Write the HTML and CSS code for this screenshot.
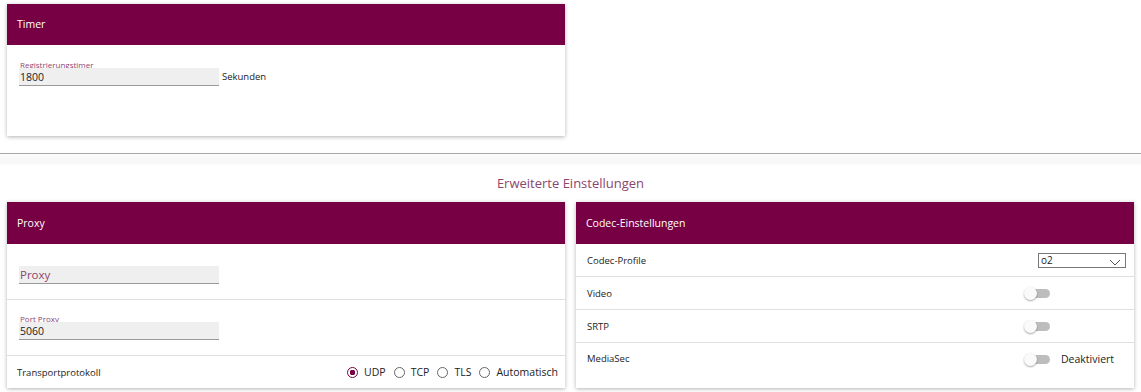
FILE: index.html
```html
<!DOCTYPE html>
<html lang="de">
<head>
    <meta charset="UTF-8">
    <meta name="viewport" content="width=device-width, initial-scale=1.0">
    <title>SIP Einstellungen</title>
    <link rel="stylesheet" href="styles.css">
</head>
<body>
    <div class="top">
        <div class="card timer">
            <div class="card-header">Timer</div>
            <div class="card-body">
                <div class="field-line">
                    <div class="field">
                        <label class="field-label">Registrierungstimer</label>
                        <input class="field-input" type="text" value="1800">
                    </div>
                    <span class="unit">Sekunden</span>
                </div>
            </div>
        </div>
    </div>

    <div class="divider"></div>

    <div class="section-title">Erweiterte Einstellungen</div>

    <div class="advanced">
        <!-- Proxy -->
        <div class="card">
            <div class="card-header">Proxy</div>
            <div class="rows">
                <div class="row input-row">
                    <div class="field">
                        <label class="field-label"></label>
                        <input class="field-input" type="text" placeholder="Proxy">
                    </div>
                </div>
                <div class="row input-row">
                    <div class="field">
                        <label class="field-label">Port Proxy</label>
                        <input class="field-input" type="text" value="5060">
                    </div>
                </div>
                <div class="row last">
                    <span class="row-label">Transportprotokoll</span>
                    <div class="radios">
                        <label class="radio"><input type="radio" name="proto" checked> UDP</label>
                        <label class="radio"><input type="radio" name="proto"> TCP</label>
                        <label class="radio"><input type="radio" name="proto"> TLS</label>
                        <label class="radio"><input type="radio" name="proto"> Automatisch</label>
                    </div>
                </div>
            </div>
        </div>

        <!-- Codec -->
        <div class="card">
            <div class="card-header">Codec-Einstellungen</div>
            <div class="rows">
                <div class="row codec-row">
                    <span class="row-label">Codec-Profile</span>
                    <div class="control">
                        <div class="select">
                            <span>o2</span>
                            <svg width="12" height="7" viewBox="0 0 12 7"><path d="M1 1 L6 6 L11 1" fill="none" stroke="#555" stroke-width="1"/></svg>
                        </div>
                    </div>
                </div>
                <div class="row codec-row">
                    <span class="row-label">Video</span>
                    <div class="control"><span class="switch"></span></div>
                </div>
                <div class="row codec-row">
                    <span class="row-label">SRTP</span>
                    <div class="control"><span class="switch"></span></div>
                </div>
                <div class="row codec-row last">
                    <span class="row-label">MediaSec</span>
                    <div class="control"><span class="switch"></span><span class="state">Deaktiviert</span></div>
                </div>
            </div>
        </div>
    </div>
</body>
</html>
```

FILE: styles.css
```css
body {
    margin: 0;
    font-family: 'Open Sans', 'Segoe UI', sans-serif;
    background-color: #fff;
    color: #222;
    height: 392px;
    overflow: hidden;
}
.top {
    display: grid;
    grid-template-columns: 1fr 1fr;
    gap: 11px;
    padding: 4px 7px 0;
}
.advanced {
    display: grid;
    grid-template-columns: 1fr 1fr;
    gap: 11px;
    padding: 0 7px;
}
.card {
    background-color: #fff;
    box-shadow: 0 1px 4px rgba(0, 0, 0, 0.3);
    display: flex;
    flex-direction: column;
}
.advanced .card {
    height: 186px;
}
.card-header {
    background-color: #770044;
    color: #fff;
    font-size: 10.5px;
    height: 42px;
    flex: none;
    line-height: 42px;
    padding-left: 10px;
}
.timer {
    height: 132px;
}
.timer .card-header {
    height: 41px;
    line-height: 40px;
}
.card-body {
    padding: 15px 12px;
}
.field-line {
    display: flex;
    align-items: flex-end;
    gap: 3px;
}
.field {
    display: flex;
    flex-direction: column;
    width: 200px;
}
.field-label {
    font-size: 8px;
    line-height: 9px;
    height: 9px;
    color: #8c466e;
    padding-left: 1px;
    margin-bottom: -1px;
}
.field-input {
    width: 200px;
    height: 18px;
    box-sizing: border-box;
    border: none;
    border-bottom: 1px solid #9a9a9a;
    background-color: #efefef;
    font-family: inherit;
    font-size: 10.5px;
    color: #222;
    padding: 0 1px;
    margin: 0;
    outline: none;
}
.field-input::placeholder {
    color: #8c466e;
    font-size: 11.5px;
}
.unit {
    font-size: 9.5px;
    line-height: 18px;
}
.divider {
    margin-top: 17px;
    border-top: 1px solid #a8a8a8;
    height: 12px;
    background: linear-gradient(#fdfdfd, #f6f6f6 70%, #fff);
}
.section-title {
    text-align: center;
    color: #8c466e;
    font-size: 13px;
    line-height: 18px;
    padding: 8px 0 10px;
}
.rows {
    display: flex;
    flex-direction: column;
    flex: 1;
}
.row {
    display: flex;
    align-items: center;
    border-bottom: 1px solid #e0e0e0;
    padding: 0 10px;
}
.row.last {
    border-bottom: none;
    flex: 1;
}
.input-row {
    height: 56px;
    flex: none;
    padding-left: 12px;
    align-items: flex-start;
    padding-top: 14px;
    box-sizing: border-box;
}
.row-label {
    font-size: 9.5px;
    flex: 1;
}
.radios {
    display: flex;
    align-items: center;
    gap: 8px;
    font-size: 10.5px;
    margin-right: -3px;
}
.radio {
    display: flex;
    align-items: center;
    gap: 6px;
}
.radio input {
    appearance: none;
    width: 11px;
    height: 11px;
    margin: 0;
    border: 1px solid #666;
    border-radius: 50%;
    box-sizing: border-box;
}
.radio input:checked {
    border-color: #770044;
    background: radial-gradient(circle, #770044 0, #770044 2.6px, #fff 3px);
}
.codec-row {
    height: 33px;
    flex: none;
    box-sizing: border-box;
    padding: 0 0 0 11px;
}
.codec-row.last {
    flex: 1;
    align-items: flex-start;
    padding-top: 9px;
}
.codec-row .control {
    width: 110px;
    display: flex;
    align-items: center;
}
.select {
    margin-left: auto;
    margin-right: 8px;
    width: 88px;
    height: 15px;
    box-sizing: border-box;
    border: 1px solid #777;
    font-size: 10px;
    line-height: 13px;
    padding-left: 2px;
    display: flex;
    justify-content: space-between;
    align-items: flex-end;
}
.select svg {
    margin: 0 4px 1px 0;
}
.switch {
    position: relative;
    display: inline-block;
    width: 26px;
    height: 13px;
}
.switch::before {
    content: '';
    position: absolute;
    left: 4px;
    right: 0;
    top: 2px;
    height: 9px;
    border-radius: 5px;
    background-color: #bdbdbd;
}
.switch::after {
    content: '';
    position: absolute;
    left: 0;
    top: 0;
    width: 13px;
    height: 13px;
    border-radius: 50%;
    background-color: #fafafa;
    box-shadow: 0 1px 2px rgba(0, 0, 0, 0.35);
}
.state {
    font-size: 10.5px;
    margin-left: 11px;
}
```
